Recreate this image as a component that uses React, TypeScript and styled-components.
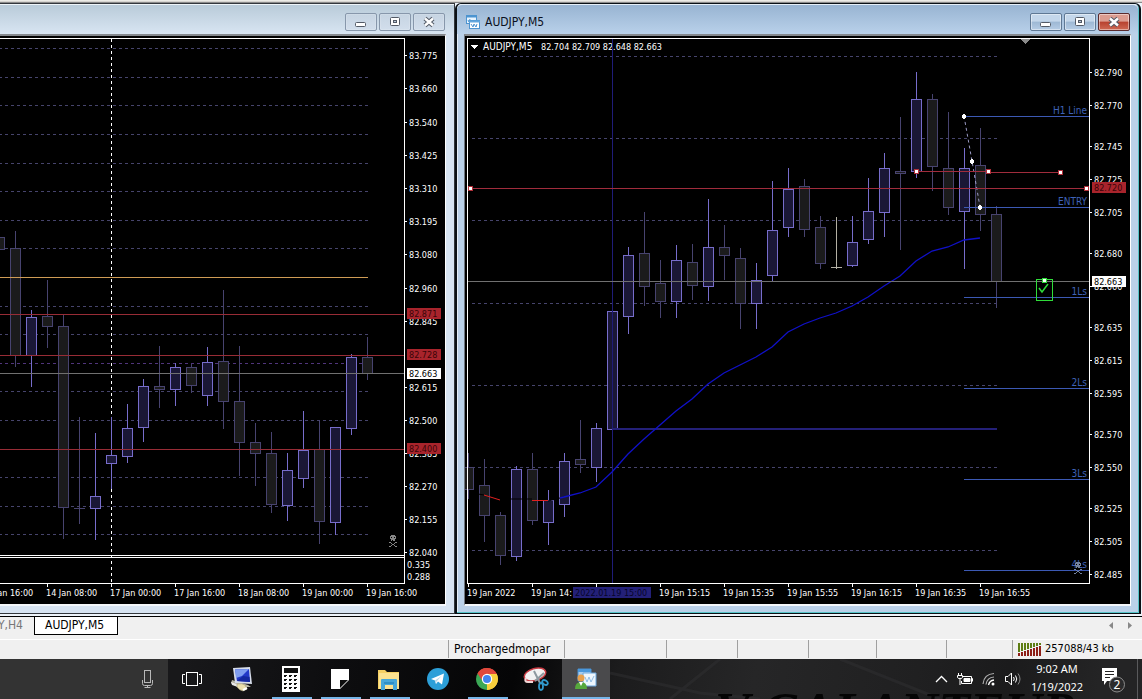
import React from "react";
import styled, { createGlobalStyle, css } from "styled-components";

const uiFont = `"DejaVu Sans Condensed", "DejaVu Sans", sans-serif`;

const GlobalStyle = createGlobalStyle`
  * { box-sizing: border-box; }
  body { margin: 0; background: #f0f0f0; font-family: ${uiFont}; font-size: 12px; color: #000; overflow-x: hidden; }
  button { font: inherit; border: 0; padding: 0; background: none; color: inherit; }
`;

/* ---------- page frame ---------- */

const Page = styled.div`
  min-height: 100vh;
  display: flex;
  flex-direction: column;
`;

const ToolbarEdge = styled.div`
  height: 3px;
  background: linear-gradient(#ecebe6 0 1px, #d6d4d0 1px 2px, #8a8a8a 2px);
`;

const Workspace = styled.main`
  display: grid;
  grid-template-columns: 455fr 687fr;
  background: #eef4fa;
  padding-bottom: 2px;
`;

/* ---------- chart windows ---------- */

const Frame = styled.section<{ $active?: boolean }>`
  border-top: 1px solid #33373c;
  border-bottom: 1px solid #33373c;
  border-right: 1px solid #33373c;
  background: #d7e4f2;
  padding: 0 8px 7px 0;
  ${(p) =>
    p.$active &&
    css`
      background: #bad1e9;
      border: 1px solid #0b1116;
      border-left-width: 2px;
      border-right-width: 2px;
      border-radius: 6px 6px 0 0;
      margin-right: 1px;
      padding: 0 8px 7px 7px;
      box-shadow: inset -1px -1px 0 #55c4c8, inset 1px 1px 0 #e6eff8;
    `}
`;

const TitleBar = styled.header<{ $active?: boolean }>`
  height: 30px;
  display: flex;
  align-items: center;
  gap: 5px;
  padding: 5px 9px 0 0;
  border-top: 1px solid ${(p) => (p.$active ? "#e6eff8" : "#eef4f8")};
  background: ${(p) =>
    p.$active ? "linear-gradient(#98b4d2, #b9d1ea)" : "linear-gradient(#b9cbd9, #d8e5f2)"};
  margin: ${(p) => (p.$active ? "0 -7px 0 -7px" : "0 -8px 0 0")};
  padding-left: ${(p) => (p.$active ? "9px" : "0")};
  padding-right: ${(p) => (p.$active ? "8px" : "9px")};
  border-radius: ${(p) => (p.$active ? "5px 5px 0 0" : "0")};
`;

const Title = styled.h1`
  margin: 0;
  font-size: 12px;
  line-height: 16px;
  font-weight: 400;
  color: #0a1020;
`;

const WindowButtons = styled.div`
  margin-left: auto;
  display: flex;
  gap: 2px;
`;

const WindowButton = styled.button<{ $look: "idle" | "glass" | "close" }>`
  width: 32px;
  height: 18px;
  display: grid;
  place-items: center;
  border: 1px solid ${(p) => (p.$look === "close" ? "#5b2a2c" : p.$look === "glass" ? "#5f7894" : "#8797ab")};
  border-radius: 2px;
  background: ${(p) =>
    p.$look === "close"
      ? "linear-gradient(#dc9c90 0 45%, #b8412f 50%, #cf6a55)"
      : p.$look === "glass"
      ? "linear-gradient(#c4d7eb 0 45%, #9db8d4 50%, #b6cde6)"
      : "linear-gradient(#c6d4e2, #d2deec)"};
  box-shadow: inset 0 0 0 1px rgba(255, 255, 255, ${(p) => (p.$look === "idle" ? 0.15 : 0.45)});
`;

const ChartBody = styled.div<{ $active?: boolean }>`
  border-top: 2px solid #85898e;
  border-right: 1px solid #fff;
  border-bottom: 2px solid #f4f7fa;
  border-left: ${(p) => (p.$active ? "1px solid #6f7780" : "0")};
  background: #000;
`;

const Plot = styled.svg`
  display: block;
  width: 100%;
  height: auto;
  shape-rendering: crispEdges;
`;

const Label = styled.text<{ $fill?: string; $name?: boolean }>`
  font-family: ${uiFont};
  font-size: ${(p) => (p.$name ? 10 : 9)}px;
  fill: ${(p) => p.$fill ?? "#fff"};
  white-space: pre;
`;

/* ---------- chart data ---------- */

type Candle = [x: number, high: number, low: number, top: number, bottom: number, up: 0 | 1];

const leftCandles: Candle[] = [
  [-1, 237, 249, 237, 249, 0],
  [15, 231, 366, 248, 355, 0],
  [31, 310, 386, 317, 355, 1],
  [47, 280, 347, 316, 326, 0],
  [63, 315, 538, 326, 507, 0],
  [79, 417, 523, 508, 508, 0],
  [95, 433, 539, 496, 508, 1],
  [111, 417, 488, 455, 463, 1],
  [127, 404, 462, 428, 456, 1],
  [143, 379, 441, 386, 427, 1],
  [159, 346, 407, 386, 389, 0],
  [175, 363, 405, 367, 389, 1],
  [191, 364, 392, 367, 385, 0],
  [207, 347, 405, 362, 395, 1],
  [223, 290, 428, 361, 401, 0],
  [239, 346, 475, 401, 442, 0],
  [255, 423, 485, 442, 453, 0],
  [271, 432, 512, 453, 504, 0],
  [287, 453, 520, 470, 505, 1],
  [303, 411, 487, 450, 478, 1],
  [319, 420, 543, 449, 521, 0],
  [335, 427, 534, 427, 522, 1],
  [351, 354, 434, 357, 428, 1],
  [367, 337, 379, 357, 373, 0],
];

const rightCandles: Candle[] = [
  [468, 453, 498, 467, 489, 0],
  [484, 459, 541, 485, 515, 0],
  [500, 512, 564, 515, 555, 0],
  [516, 466, 560, 469, 556, 1],
  [532, 453, 524, 469, 520, 0],
  [548, 490, 544, 500, 522, 1],
  [564, 453, 516, 461, 504, 1],
  [580, 420, 472, 459, 464, 0],
  [596, 423, 481, 428, 467, 1],
  [612, 311, 429, 311, 429, 1],
  [628, 247, 333, 255, 316, 1],
  [644, 212, 305, 253, 286, 0],
  [660, 260, 317, 283, 301, 0],
  [676, 245, 317, 260, 301, 1],
  [692, 244, 299, 262, 285, 0],
  [708, 199, 300, 247, 286, 1],
  [724, 225, 279, 247, 255, 0],
  [740, 248, 328, 258, 303, 0],
  [756, 263, 328, 280, 303, 1],
  [772, 181, 281, 230, 275, 1],
  [788, 168, 236, 189, 227, 1],
  [804, 179, 236, 186, 229, 0],
  [820, 216, 268, 227, 263, 0],
  [852, 216, 266, 242, 265, 1],
  [868, 178, 243, 211, 239, 1],
  [884, 153, 236, 168, 212, 1],
  [900, 117, 249, 171, 173, 0],
  [916, 72, 177, 99, 171, 1],
  [932, 94, 190, 99, 166, 0],
  [948, 112, 214, 168, 207, 0],
  [964, 148, 268, 168, 211, 1],
  [980, 128, 230, 165, 214, 0],
  [996, 206, 307, 214, 281, 0],
];

const leftPrices: [number, string][] = [
  [55, "83.775"], [88, "83.660"], [122, "83.540"], [155, "83.425"], [188, "83.310"],
  [221, "83.195"], [254, "83.080"], [288, "82.960"], [321, "82.845"], [387, "82.615"],
  [420, "82.500"], [453, "82.385"], [486, "82.270"], [519, "82.155"], [552, "82.040"],
];
const rightPrices: [number, string][] = [
  [72, "82.790"], [105, "82.770"], [146, "82.745"], [179, "82.725"], [212, "82.705"],
  [253, "82.680"], [286, "82.660"], [327, "82.635"], [360, "82.615"], [393, "82.595"],
  [434, "82.570"], [467, "82.550"], [508, "82.525"], [541, "82.505"], [574, "82.485"],
];
const leftTimes: [number, string][] = [
  [-17, "13 Jan 16:00"], [47, "14 Jan 08:00"], [111, "17 Jan 00:00"], [175, "17 Jan 16:00"],
  [239, "18 Jan 08:00"], [303, "19 Jan 00:00"], [367, "19 Jan 16:00"],
];
const rightTimes: [number, string][] = [
  [468, "19 Jan 2022"], [532, "19 Jan 14:"], [596, ""], [660, "19 Jan 15:15"], [724, "19 Jan 15:35"],
  [788, "19 Jan 15:55"], [852, "19 Jan 16:15"], [916, "19 Jan 16:35"], [980, "19 Jan 16:55"],
];

/* ---------- chart parts ---------- */

const H = ({ y, x1, x2, c, h = 1 }: { y: number; x1: number; x2: number; c: string; h?: number }) => (
  <rect x={x1} y={y} width={x2 - x1} height={h} fill={c} />
);
const V = ({ x, y1, y2, c }: { x: number; y1: number; y2: number; c: string }) => (
  <rect x={x} y={y1} width={1} height={y2 - y1} fill={c} />
);
const Dashes = ({ y, x1, x2, c = "#46446c" }: { y: number; x1: number; x2: number; c?: string }) => (
  <line x1={x1} x2={x2} y1={y + 0.5} y2={y + 0.5} stroke={c} strokeDasharray="3 3" />
);

const Candles = ({ data }: { data: Candle[] }) => (
  <g>
    {data.map(([x, high, low, top, bottom, up]) => {
      const line = up ? "#776dcb" : "#47436f";
      return (
        <g key={x}>
          <V x={x} y1={high} y2={low + 1} c={line} />
          <rect x={x - 5} y={top} width={11} height={bottom - top + 1} fill={line} />
          {bottom - top > 1 && (
            <rect x={x - 4} y={top + 1} width={9} height={bottom - top - 1} fill={up ? "#1a1736" : "#1b1b1c"} />
          )}
        </g>
      );
    })}
  </g>
);

const PriceScale = ({ x, prices }: { x: number; prices: [number, string][] }) => (
  <g>
    {prices.map(([y, text]) => (
      <g key={text}>
        <H y={y} x1={x} x2={x + 3} c="#fff" />
        <Label x={x + 5} y={y + 4}>{text}</Label>
      </g>
    ))}
  </g>
);

const TimeScale = ({ times }: { times: [number, string][] }) => (
  <g>
    {times.map(([x, text]) => (
      <g key={x}>
        <V x={x} y1={584} y2={587} c="#fff" />
        {text && <Label x={x - 1} y={596}>{text}</Label>}
      </g>
    ))}
  </g>
);

const PriceTag = ({ x, y, text, current }: { x: number; y: number; text: string; current?: boolean }) => (
  <g>
    <rect x={x} y={y} width={34} height={11} fill={current ? "#fff" : "#a8242c"} />
    <Label x={x + 2} y={y + 9} $fill={current ? "#000" : "#3a0508"}>{text}</Label>
  </g>
);

const Handle = ({ x, y, c = "#b0303a" }: { x: number; y: number; c?: string }) => (
  <g>
    <rect x={x - 2} y={y - 2} width={5} height={5} fill={c} />
    <rect x={x - 1} y={y - 1} width={3} height={3} fill="#fff" />
  </g>
);

const Skull = ({ x, y, c }: { x: number; y: number; c: string }) => (
  <g transform={`translate(${x - 5} ${y - 6})`} fill={c}>
    <path d="M3 0h4v1h1v3h-1v2h-4v-2h-1v-3h1z" />
    <path d="M1 7h2v1h-2zM7 7h2v1h-2zM3 8h1v1h-1zM6 8h1v1h-1zM4 9h2v1h-2zM3 10h1v1h-1zM6 10h1v1h-1zM1 11h2v1h-2zM7 11h2v1h-2z" />
    <path d="M3 2h1v1h-1zM6 2h1v1h-1zM4 5h1v1h-1z" fill="#000" />
  </g>
);

const LeftChart = () => (
  <Plot viewBox="0 36 445 568" role="img" aria-label="AUDJPY H4 price chart">
    {[48, 77, 105, 134, 163, 191, 220, 248, 306, 334, 391, 420, 477, 506, 534].map((y) => (
      <Dashes key={y} y={y} x1={-1} x2={368} />
    ))}
    <Dashes y={363} x1={-1} x2={368} c="#50357c" />
    <line x1={111.5} x2={111.5} y1={39} y2={583} stroke="#fff" strokeDasharray="3 3" />
    <Candles data={leftCandles} />
    <H y={277} x1={0} x2={368} c="#cf9c55" />
    {[314, 355, 449].map((y) => <H key={y} y={y} x1={0} x2={404} c="#982c36" />)}
    <H y={373} x1={0} x2={404} c="#707070" />
    <H y={38} x1={0} x2={405} c="#fff" />
    <H y={555} x1={0} x2={405} c="#fff" />
    <H y={557} x1={0} x2={405} c="#fff" />
    <H y={583} x1={0} x2={405} c="#fff" />
    <V x={404} y1={38} y2={584} c="#fff" />
    <Skull x={393} y={541} c="#868686" />
    <PriceScale x={404} prices={leftPrices} />
    <Label x={407} y={568}>0.335</Label>
    <Label x={407} y={580}>0.288</Label>
    <PriceTag x={407} y={308} text="82.871" />
    <PriceTag x={407} y={349} text="82.728" />
    <PriceTag x={407} y={443} text="82.400" />
    <PriceTag x={407} y={368} text="82.663" current />
    <TimeScale times={leftTimes} />
  </Plot>
);

const levels: [number, string][] = [
  [116, "H1 Line"], [207, "ENTRY"], [297, "1Ls"], [388, "2Ls"], [479, "3Ls"], [570, "4Ls"],
];

const RightChart = () => (
  <Plot viewBox="465 36 665 568" role="img" aria-label="AUDJPY M5 price chart">
    <Label $name x={483} y={50}>AUDJPY,M5</Label>
    <Label x={541} y={50}>82.704 82.709 82.648 82.663</Label>
    <path d="M471 45h7l-3 4h-1z" fill="#fff" />
    <path d="M1021 39h9l-4 5h-1z" fill="#8a8a8a" />
    {[56, 138, 220, 303, 385, 467, 550].map((y) => <Dashes key={y} y={y} x1={472} x2={997} />)}
    <Candles data={rightCandles} />
    <V x={836} y1={217} y2={269} c="#b3b0a4" />
    <H y={267} x1={831} x2={842} c="#b3b0a4" />
    <V x={612} y1={39} y2={583} c="#1f1c78" />
    <H y={428} x1={612} x2={997} c="#242078" h={2} />
    <g fill="none" strokeWidth={1} shapeRendering="geometricPrecision">
      <path d="M478 494L484 495M500 499L532 499M548 501L564 497M975 241L990 242" stroke="#000" />
      <path d="M484 495L500 500M532 500.500L548 500.500" stroke="#e02020" />
      <path
        d="M560 498L564 497L580 493L596 487L612 472L628 454L644 439L660 425L676 411L692 399L708 384L724 373L740 365L756 357L772 347L788 332L804 324L820 318L836 313L852 306L868 297L884 286L900 276L916 261L932 251L948 247L964 240L980 238"
        stroke="#1010c8"
        strokeWidth={1.300}
      />
      <path d="M964 116L972 161L980 207" stroke="#9a9ac4" strokeDasharray="3 3" />
    </g>
    <H y={188} x1={468} x2={1087} c="#a02c3c" />
    <H y={171} x1={916} x2={988} c="#a02c3c" />
    <H y={172} x1={988} x2={1060} c="#a02c3c" />
    <H y={281} x1={468} x2={1089} c="#707070" />
    {levels.map(([y, text]) => (
      <g key={text}>
        <H y={y} x1={964} x2={1089} c="#3c59b4" />
        <Label $name $fill="#3f62b8" x={1087} y={y - 2} textAnchor="end">{text}</Label>
      </g>
    ))}
    <Skull x={1078} y={568} c="#7482a0" />
    <Handle x={470} y={188} />
    <Handle x={1086} y={188} />
    <Handle x={916} y={171} />
    <Handle x={988} y={171} />
    <Handle x={1060} y={172} />
    {[[962, 115], [970, 160], [978, 206]].map(([x, y]) => (
      <g key={x} fill="#fff">
        <rect x={x} y={y} width={4} height={3} />
        <rect x={x + 1} y={y - 1} width={2} height={5} />
      </g>
    ))}
    <rect x={1036.500} y={279.500} width={16} height={21} fill="none" stroke="#2fdc3a" />
    <path d="M1039 288L1042 292L1048 284" fill="none" stroke="#2fdc3a" strokeWidth={1.500} shapeRendering="geometricPrecision" />
    <Handle x={1044} y={280} c="#2fdc3a" />
    <H y={38} x1={467} x2={1090} c="#fff" />
    <H y={583} x1={467} x2={1090} c="#fff" />
    <V x={467} y1={38} y2={584} c="#fff" />
    <V x={1089} y1={38} y2={584} c="#fff" />
    <PriceScale x={1089} prices={rightPrices} />
    <PriceTag x={1092} y={182} text="82.720" />
    <PriceTag x={1092} y={276} text="82.663" current />
    <TimeScale times={rightTimes} />
    <rect x={573} y={587} width={78} height={11} fill="#232078" />
    <Label x={575} y={596} $fill="#07062a">2022.01.19 15:00</Label>
  </Plot>
);

const ChartIcon = () => (
  <svg width="14" height="14" viewBox="0 0 14 14" aria-hidden="true">
    <rect x="0.500" y="0.500" width="10" height="8" fill="#eaf5ff" stroke="#4d94d0" />
    <path d="M0 1.500h11" stroke="#4d94d0" strokeWidth="2" />
    <path d="M2 5l1 2 1-3" stroke="#4d94d0" fill="none" />
    <rect x="3.500" y="5.500" width="10" height="8" fill="#fff" stroke="#4d94d0" />
    <path d="M3 6.500h11" stroke="#64a8de" strokeWidth="2" />
    <path d="M5 9l2 3 1-3 2 3 1-3" stroke="#4d94d0" fill="none" />
  </svg>
);

const Controls = ({ active }: { active?: boolean }) => {
  const look = active ? "glass" : "idle";
  return (
    <WindowButtons>
      <WindowButton $look={look} aria-label="Minimize">
        <svg width="12" height="12"><rect x="0.500" y="6.500" width="10" height="4" rx="1" fill="#fff" stroke="#535a66" /></svg>
      </WindowButton>
      <WindowButton $look={look} aria-label="Restore">
        <svg width="12" height="12">
          <rect x="1.500" y="1.500" width="9" height="8" rx="1" fill="#fff" stroke="#535a66" />
          <rect x="4.500" y="4.500" width="3" height="2" fill="#b8c8da" stroke="#535a66" />
        </svg>
      </WindowButton>
      <WindowButton $look={active ? "close" : look} aria-label="Close">
        <svg width="12" height="12" fill="none">
          <path d="M2 2.500L10 9.500M10 2.500L2 9.500" stroke="#535a66" strokeWidth="4.400" />
          <path d="M2 2.500L10 9.500M10 2.500L2 9.500" stroke="#fff" strokeWidth="2.400" />
        </svg>
      </WindowButton>
    </WindowButtons>
  );
};

/* ---------- tabs and status bar ---------- */

const TabStrip = styled.nav`
  height: 24px;
  display: flex;
  align-items: flex-start;
  border-top: 1px solid #000;
  border-bottom: 1px solid #fff;
  background: #f0f0f0;
`;

const Tab = styled.button<{ $selected?: boolean }>`
  height: 18px;
  line-height: 17px;
  overflow: hidden;
  display: flex;
  justify-content: flex-end;
  color: #777;
  width: 34px;
  padding-right: 11px;
  ${(p) =>
    p.$selected &&
    css`
      width: 84px;
      justify-content: flex-start;
      padding: 0 0 0 10px;
      color: #000;
      background: #fff;
      border: 1px solid #000;
      border-top: 0;
    `}
`;

const TabArrows = styled.div`
  margin-left: auto;
  display: flex;
  gap: 12px;
  padding: 5px 8px 0 0;
`;

const ArrowButton = styled.button`
  width: 7px;
  height: 7px;
  display: flex;
`;

const StatusBar = styled.footer`
  height: 19px;
  display: flex;
  justify-content: flex-end;
  background: #f0f0f0;
`;

const StatusCell = styled.div<{ $w: number }>`
  width: ${(p) => p.$w}px;
  border-left: 1px solid #a0a0a0;
  margin-bottom: 1px;
  padding-left: 5px;
  line-height: 18px;
  display: flex;
  align-items: center;
  gap: 4px;
  white-space: nowrap;
`;

const Traffic = styled.span`
  font-size: 11px;
`;

const TrafficBars = () => (
  <svg width="23" height="14" viewBox="0 0 23 14" shapeRendering="crispEdges" aria-hidden="true">
    {[0, 3, 6, 9, 12, 15, 18, 21].map((x, i) => (
      <g key={x}>
        <rect x={x} y={1} width={2} height={9 - i} fill="#5d7d14" />
        <rect x={x} y={11 - i} width={2} height={3 + i} fill="#8e1f17" />
      </g>
    ))}
  </svg>
);

/* ---------- taskbar ---------- */

const Taskbar = styled.div`
  height: 40px;
  margin-top: auto;
  display: flex;
  position: relative;
  overflow: hidden;
  color: #fff;
  background: linear-gradient(100deg, #18181a 16%, #0d0d0f 30%, #050506 45%, #1c1c1d 54%, #262627 66%, #202021 80%, #1b1b1c 88%, #242425 96%);
`;

const Wallpaper = styled.svg`
  position: absolute;
  right: 0;
  top: 0;
`;

const SearchArea = styled.div`
  flex: 0 0 168px;
  background: #333;
  display: flex;
  align-items: center;
  justify-content: flex-end;
  padding-right: 13px;
`;

const TaskButton = styled.button<{ $open?: boolean; $active?: boolean }>`
  width: 49px;
  height: 40px;
  display: grid;
  place-items: center;
  position: relative;
  ${(p) =>
    p.$active &&
    css`
      width: 48px;
      margin-left: 2px;
      background: #4a4a4c;
    `}
  ${(p) =>
    (p.$open || p.$active) &&
    css`
      &::after {
        content: "";
        position: absolute;
        left: ${p.$active ? 0 : 6}px;
        right: ${p.$active ? 0 : 3}px;
        bottom: 0;
        height: 2px;
        background: #76b5e8;
      }
    `}
`;

const Tray = styled.div`
  margin-left: auto;
  display: flex;
  align-items: center;
  position: relative;
  gap: 8px;
`;

const TrayButton = styled.button`
  display: grid;
  place-items: center;
  width: 16px;
  height: 40px;
`;

const Clock = styled.button`
  width: 56px;
  margin-right: 6px;
  font-family: "Noto Sans", sans-serif;
  font-size: 11px;
  line-height: 18px;
  padding-bottom: 3px;
  text-align: center;
  white-space: nowrap;
`;

const Notifications = styled.button`
  width: 27px;
  height: 40px;
  display: grid;
  place-items: center;
`;

const ShowDesktop = styled.button`
  width: 5px;
  height: 40px;
  border-left: 1px solid #5a5a5c;
  margin-left: 3px;
`;

const MicIcon = () => (
  <svg width="13" height="19" viewBox="0 0 13 19" fill="none" stroke="#b8b8b8">
    <rect x="3.500" y="0.500" width="6" height="12" />
    <path d="M1.500 10v3.500q0 2 2 2h6q2 0 2-2V10M6.500 15.500v2M3.500 17.500h6" />
  </svg>
);

const TaskViewIcon = () => (
  <svg width="21" height="16" viewBox="0 0 21 16" fill="none" stroke="#fff">
    <rect x="4.500" y="1.500" width="11" height="13" />
    <path d="M3 3.500H0.500v9H3M17 3.500h2.500v9H17" />
  </svg>
);

const ComputerIcon = () => (
  <svg width="23" height="25" viewBox="0 0 23 25">
    <path d="M2 13L18 18L21 20L7 20L1 16z" fill="#b8b6a6" />
    <path d="M3 1L20 0L22 17L5 16z" fill="#d6dcea" />
    <path d="M5 2.500L19 2L20 15L7 14z" fill="#2238c8" />
    <path d="M5 2.500L19 2L12 9L6 11z" fill="#7f9df0" />
    <path d="M7 14L20 15L19.500 10L13 9z" fill="#1428a0" />
    <path d="M1 15L9 18L8 20L2 18z" fill="#e8e8e8" />
    <path d="M7 17q5-1 8 1l2 4-4 2q-4-1-6-4z" fill="#eadfae" stroke="#a39a74" strokeWidth=".6" />
    <path d="M13 23l4-2" stroke="#fff" strokeWidth="2" />
  </svg>
);

const CalculatorIcon = () => (
  <svg width="18" height="26" viewBox="0 0 18 26" shapeRendering="crispEdges">
    <path d="M0 0h18v26H0z" fill="#fff" />
    <path d="M2 2h14v5H2z" fill="#111" />
    {[10, 14, 18, 22].map((y) => [3, 8, 13].map((x) => <path key={`${x}-${y}`} d={`M${x - 1} ${y - 1}h3v1h-1v1h-2z`} fill="#111" />))}
  </svg>
);

const NotesIcon = () => (
  <svg width="18" height="20" viewBox="0 0 18 20">
    <path d="M0 0h18v11l-9 9H0z" fill="#fff" />
    <path d="M9 19v-8h8z" fill="#0c0c0d" />
  </svg>
);

const FolderIcon = () => (
  <svg width="22" height="21" viewBox="0 0 22 21">
    <path d="M0 1h7l2 2h12v17H0z" fill="#f4cf63" />
    <path d="M1 4h20v16H1z" fill="#fbe290" />
    <path d="M3 11q0-1 1-1h14q1 0 1 1v10h-4v-5H7v5H3z" fill="#46a7d8" />
    <path d="M6 13h10v2H6z" fill="#2f8fc4" />
  </svg>
);

const TelegramIcon = () => (
  <svg width="22" height="22" viewBox="0 0 22 22">
    <circle cx="11" cy="11" r="11" fill="#2c9fd8" />
    <path d="M4 11L17 5.500L15 16.500L11 13.500L9 16L8 12.500z" fill="#fff" />
    <path d="M8 12.500L14.500 8L9.500 13.500L9 16z" fill="#b8d8ea" />
  </svg>
);

const ChromeIcon = () => (
  <svg width="22" height="22" viewBox="0 0 22 22">
    <path d="M11 11L1.500 5.500A11 11 0 0 1 20.500 5.500z" fill="#e0483c" />
    <path d="M11 11L20.500 5.500A11 11 0 0 1 11 22z" fill="#f8cf3c" />
    <path d="M11 11L11 22A11 11 0 0 1 1.500 5.500z" fill="#3ba856" />
    <path d="M11 6h9.700A11 11 0 0 1 11 22l4.500-9z" fill="#f8cf3c" />
    <path d="M1.500 5.500A11 11 0 0 1 20.700 6H11L6.500 13z" fill="#e0483c" />
    <circle cx="11" cy="11" r="5.200" fill="#fff" />
    <circle cx="11" cy="11" r="4" fill="#4284f0" />
  </svg>
);

const SnippingIcon = () => (
  <svg width="26" height="24" viewBox="0 0 26 24" fill="none">
    <ellipse cx="12" cy="7.500" rx="11" ry="6" transform="rotate(-16 12 7.500)" fill="#f2f2f2" stroke="#c83c44" strokeWidth="1.500" />
    <path d="M3 11q-2 4 2 4h5" stroke="#f2d5d5" strokeWidth="2" />
    <path d="M11 4l6 12M21 6l-9 8" stroke="#8d989f" strokeWidth="2" />
    <ellipse cx="18" cy="19.500" rx="2" ry="3.500" stroke="#3199cc" strokeWidth="1.800" />
    <ellipse cx="22" cy="15.500" rx="3" ry="2" transform="rotate(35 22 15.500)" stroke="#3199cc" strokeWidth="1.800" />
  </svg>
);

const TerminalIcon = () => (
  <svg width="22" height="22" viewBox="0 0 22 22">
    <path d="M3 1h13v12H3z" fill="#a7cdf0" stroke="#4a90d0" />
    <path d="M3 1h13v3H3z" fill="#4a98dc" />
    <path d="M8 5h13v13H8z" fill="#eef6fd" stroke="#6aa6dc" />
    <path d="M10 9l2 5 2-5 2 5 3-6" stroke="#8fbce4" fill="none" />
    <circle cx="6" cy="10" r="3.500" fill="#e8a04c" />
    <path d="M0 21q0-7 6-7t6 7z" fill="#56a83c" />
    <path d="M4 14l2 4 2-4z" fill="#fff" />
  </svg>
);

const App = () => (
  <Page>
    <GlobalStyle />
    <ToolbarEdge />
    <Workspace>
      <Frame>
        <TitleBar>
          <Controls />
        </TitleBar>
        <ChartBody>
          <LeftChart />
        </ChartBody>
      </Frame>
      <Frame $active>
        <TitleBar $active>
          <ChartIcon />
          <Title>AUDJPY,M5</Title>
          <Controls active />
        </TitleBar>
        <ChartBody $active>
          <RightChart />
        </ChartBody>
      </Frame>
    </Workspace>

    <TabStrip>
      <Tab>AUDJPY,H4</Tab>
      <Tab $selected>AUDJPY,M5</Tab>
      <TabArrows>
        <ArrowButton aria-label="Scroll tabs left">
          <svg width="7" height="7"><path d="M5 0v7L1 3.500z" fill="#888" /></svg>
        </ArrowButton>
        <ArrowButton aria-label="Scroll tabs right">
          <svg width="7" height="7"><path d="M1 0v7L5 3.500z" fill="#888" /></svg>
        </ArrowButton>
      </TabArrows>
    </TabStrip>

    <StatusBar>
      <StatusCell $w={116}>Prochargedmopar</StatusCell>
      <StatusCell $w={102} />
      <StatusCell $w={71} />
      <StatusCell $w={71} />
      <StatusCell $w={68} />
      <StatusCell $w={70} />
      <StatusCell $w={66} />
      <StatusCell $w={130}>
        <TrafficBars />
        <Traffic>257088/43 kb</Traffic>
      </StatusCell>
    </StatusBar>

    <Taskbar>
      <Wallpaper width="532" height="40" aria-hidden="true">
        <path d="M0 14L90 34L150 40M60 40L110 0M230 0L330 40" stroke="#303031" strokeWidth="3" fill="none" opacity=".5" />
        <text x="105" y="70" fontFamily="Liberation Serif, serif" fontStyle="italic" fontWeight="700" fontSize="52" fill="#050505">V GALANTEUR</text>
      </Wallpaper>
      <SearchArea>
        <TrayButton aria-label="Voice search"><MicIcon /></TrayButton>
      </SearchArea>
      <TaskButton aria-label="Task view"><TaskViewIcon /></TaskButton>
      <TaskButton aria-label="Computer"><ComputerIcon /></TaskButton>
      <TaskButton $open aria-label="Calculator"><CalculatorIcon /></TaskButton>
      <TaskButton $open aria-label="Notes"><NotesIcon /></TaskButton>
      <TaskButton $open aria-label="File Explorer"><FolderIcon /></TaskButton>
      <TaskButton aria-label="Telegram"><TelegramIcon /></TaskButton>
      <TaskButton $open aria-label="Chrome"><ChromeIcon /></TaskButton>
      <TaskButton aria-label="Snipping Tool"><SnippingIcon /></TaskButton>
      <TaskButton $active aria-label="Trading terminal"><TerminalIcon /></TaskButton>
      <Tray>
        <TrayButton aria-label="Show hidden icons">
          <svg width="13" height="8" fill="none" stroke="#fff"><path d="M1 7L6.500 1.500L12 7" strokeWidth="1.300" /></svg>
        </TrayButton>
        <TrayButton aria-label="Battery">
          <svg width="16" height="13" viewBox="0 0 16 13" fill="none" stroke="#fff">
            <path d="M6 3.500h8.500v7h-10V8M14.500 5.500h1v3" />
            <path d="M7 5.500h6v3H7z" fill="#fff" />
            <path d="M1.500 0v2M4.500 0v2M0.500 2.500h5v2q0 1-2.500 1T0.500 4.500zM3 5v7" />
          </svg>
        </TrayButton>
        <TrayButton aria-label="Wi-Fi">
          <svg width="14" height="14" viewBox="0 0 14 14" fill="none">
            <path d="M1 12Q2 2 12 1.500M4 12.500Q5 5.500 12 5" stroke="#b0b0b0" strokeWidth="1.200" />
            <path d="M6.500 13Q7.500 8.500 12 8" stroke="#fff" strokeWidth="1.300" />
            <circle cx="11" cy="12" r="1.500" fill="#fff" />
          </svg>
        </TrayButton>
        <TrayButton aria-label="Volume">
          <svg width="16" height="14" viewBox="0 0 16 14" fill="none" stroke="#fff">
            <path d="M0.500 4.500h2.500l3.500-3.500v12L3 9.500H0.500z" />
            <path d="M8.500 5q1.500 2 0 4M10.500 3.500q2.500 3.500 0 7" />
            <path d="M13 1.500q4 5.500 0 11" stroke="#888" />
          </svg>
        </TrayButton>
        <Clock>9:02 AM<br />1/19/2022</Clock>
        <Notifications aria-label="2 notifications">
          <svg width="26" height="28" viewBox="0 0 26 28">
            <path d="M2 3h15v13H7l-3 4v-4H2z" fill="#fff" />
            <path d="M5 6.500h9M5 9.500h9M5 12.500h5" stroke="#222" />
            <circle cx="17" cy="19.500" r="7.500" fill="#2b2b2c" stroke="#8c8c8c" />
            <text x="17" y="24" textAnchor="middle" fontFamily="Noto Sans, sans-serif" fontSize="12" fill="#fff">2</text>
          </svg>
        </Notifications>
        <ShowDesktop aria-label="Show desktop" />
      </Tray>
    </Taskbar>
  </Page>
);

export default App;
